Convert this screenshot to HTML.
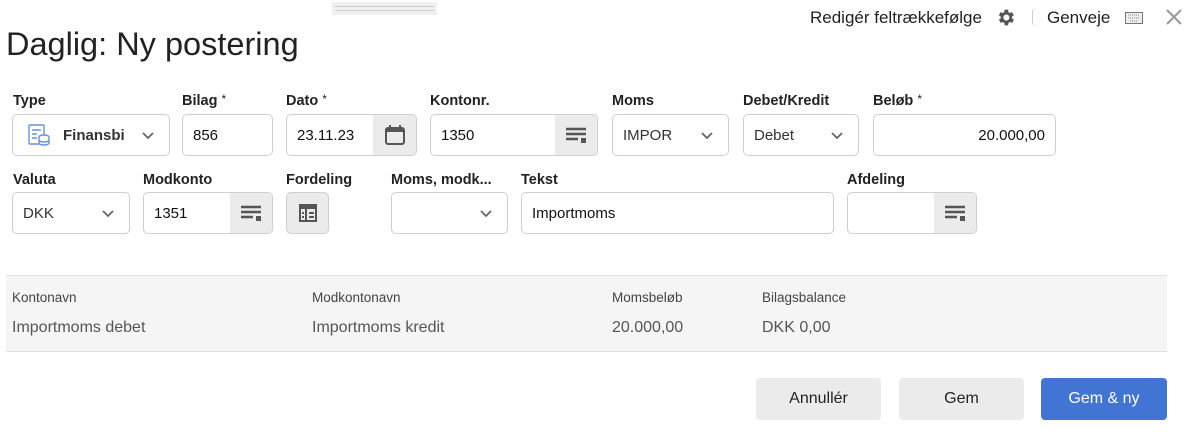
<!DOCTYPE html>
<html><head><meta charset="utf-8"><style>
*{box-sizing:border-box;margin:0;padding:0}
body{width:1192px;height:439px;background:#fff;font-family:"Liberation Sans",Arial,sans-serif;position:relative;overflow:hidden;color:#222}
.a{position:absolute}
.lbl{position:absolute;font-weight:bold;font-size:14.5px;color:#222}
.lbl sup{font-weight:normal;font-size:12px;vertical-align:top;position:relative;top:-1px}
.in{position:absolute;border:1px solid #cfcfcf;border-radius:5px;background:#fff;font-size:15px;color:#111;display:flex;align-items:center;padding-left:10px;overflow:hidden}
.btn{position:absolute;top:0;right:0;bottom:0;width:42px;background:#ebebeb;display:flex;align-items:center;justify-content:center}
.chev{position:absolute;right:14px;top:15px}
.sel{color:#333}
.pl{position:absolute;font-size:13.5px;color:#444}
.pv{position:absolute;font-size:16px;color:#555}
.b{position:absolute;top:378px;height:42px;border-radius:4px;font-size:16px;display:flex;align-items:center;justify-content:center;background:#ebebeb;color:#222}
</style></head><body>
<div class="a" style="left:332px;top:2px;width:105px;height:13px;background:#f0f0f0"></div>
<div class="a" style="left:335px;top:6px;width:99px;height:1px;background:#ccc"></div>
<div class="a" style="left:335px;top:10px;width:99px;height:1px;background:#ccc"></div>
<div class="a" style="left:810px;top:8px;font-size:17px;color:#222">Redigér feltrækkefølge</div>
<svg class="a" style="left:995px;top:7px" width="21" height="21" viewBox="0 0 24 24"><path fill="#555" d="M19.4 13a7.5 7.5 0 000-2l2.1-1.6-2-3.5-2.5 1a7 7 0 00-1.7-1L15 3h-4l-.4 2.9a7 7 0 00-1.7 1l-2.5-1-2 3.5L6.6 11a7.5 7.5 0 000 2l-2.1 1.6 2 3.5 2.5-1a7 7 0 001.7 1L11 21h4l.4-2.9a7 7 0 001.7-1l2.5 1 2-3.5zM13 15.5a3.5 3.5 0 110-7 3.5 3.5 0 010 7z"/></svg>
<div class="a" style="left:1032px;top:8px;width:4px;height:18px;border-left:1px solid #ccc;border-radius:4px 0 0 4px"></div>
<div class="a" style="left:1047px;top:8px;font-size:17px;color:#222">Genveje</div>
<svg class="a" style="left:1125px;top:12px" width="18" height="12" viewBox="0 0 18 12"><rect x="0.5" y="0.5" width="17" height="11" fill="#eee" stroke="#777"/><path d="M3 3h12M3 6h12M5 9h8" stroke="#888" stroke-dasharray="1 1"/></svg>
<svg class="a" style="left:1165px;top:8px" width="18" height="18" viewBox="0 0 18 18"><path d="M2 2L16 16M16 2L2 16" stroke="#999" stroke-width="2"/></svg>
<div class="a" style="left:6px;top:26px;font-size:32.5px;color:#222">Daglig: Ny postering</div>

<div class="lbl" style="left:13px;top:93px">Type</div>
<div class="lbl" style="left:182px;top:93px">Bilag <sup>*</sup></div>
<div class="lbl" style="left:286px;top:93px">Dato <sup>*</sup></div>
<div class="lbl" style="left:430px;top:93px">Kontonr.</div>
<div class="lbl" style="left:612px;top:93px">Moms</div>
<div class="lbl" style="left:743px;top:93px">Debet/Kredit</div>
<div class="lbl" style="left:873px;top:93px">Beløb <sup>*</sup></div>

<svg width="0" height="0" style="position:absolute"><defs>
<symbol id="ch" viewBox="0 0 14 10"><path d="M2 3l5 5 5-5" fill="none" stroke="#666" stroke-width="1.8"/></symbol>
<symbol id="ls" viewBox="0 0 20 16"><path d="M0 2h20M0 7h20M0 12h12" stroke="#555" stroke-width="2.4"/><rect x="15" y="11" width="5" height="5" fill="#555"/></symbol>
</defs></svg>

<div class="in" style="left:12px;top:114px;width:158px;height:42px;padding-left:14px">
<svg width="24" height="24" viewBox="0 0 24 24"><rect x="2" y="2" width="15" height="19" rx="1" fill="none" stroke="#6a8fe0" stroke-width="1.4"/><path d="M5 7h9M5 11h5M5 15h5" stroke="#6a8fe0" stroke-width="1.4"/><ellipse cx="17" cy="14" rx="5" ry="2" fill="#fff" stroke="#6a8fe0" stroke-width="1.4"/><path d="M12 14v6c0 1.2 2.2 2 5 2s5-.8 5-2v-6M12 17c0 1.2 2.2 2 5 2s5-.8 5-2" fill="#fff" stroke="#6a8fe0" stroke-width="1.4"/></svg>
<span style="font-weight:bold;margin-left:12px;color:#333">Finansbi</span><svg class="chev" width="14" height="10"><use href="#ch"/></svg></div>
<div class="in" style="left:182px;top:114px;width:91px;height:42px">856</div>
<div class="in" style="left:286px;top:114px;width:131px;height:42px">23.11.23<div class="btn" style="width:43px"><svg width="22" height="22" viewBox="0 0 22 22"><rect x="2" y="4" width="18" height="16" rx="2" fill="none" stroke="#555" stroke-width="2"/><rect x="2" y="4" width="18" height="4" fill="#555"/><path d="M6 1v5M16 1v5" stroke="#555" stroke-width="2"/></svg></div></div>
<div class="in" style="left:430px;top:114px;width:168px;height:42px">1350<div class="btn"><svg width="20" height="16"><use href="#ls"/></svg></div></div>
<div class="in sel" style="left:612px;top:114px;width:117px;height:42px">IMPOR<svg class="chev" width="14" height="10"><use href="#ch"/></svg></div>
<div class="in sel" style="left:743px;top:114px;width:116px;height:42px">Debet<svg class="chev" width="14" height="10"><use href="#ch"/></svg></div>
<div class="in" style="left:873px;top:114px;width:183px;height:42px;justify-content:flex-end;padding-right:10px">20.000,00</div>

<div class="lbl" style="left:13px;top:172px">Valuta</div>
<div class="lbl" style="left:143px;top:172px">Modkonto</div>
<div class="lbl" style="left:286px;top:172px">Fordeling</div>
<div class="lbl" style="left:391px;top:172px">Moms, modk...</div>
<div class="lbl" style="left:521px;top:172px">Tekst</div>
<div class="lbl" style="left:847px;top:172px">Afdeling</div>

<div class="in sel" style="left:12px;top:192px;width:118px;height:42px">DKK<svg class="chev" width="14" height="10"><use href="#ch"/></svg></div>
<div class="in" style="left:143px;top:192px;width:130px;height:42px">1351<div class="btn"><svg width="20" height="16"><use href="#ls"/></svg></div></div>
<div class="in" style="left:286px;top:192px;width:43px;height:42px;background:#ebebeb;justify-content:center;padding:0"><svg width="18" height="18" viewBox="0 0 18 18"><rect x="1" y="1" width="16" height="16" fill="none" stroke="#555" stroke-width="2"/><rect x="1" y="1" width="16" height="4" fill="#555"/><path d="M7 5v12M10 9h5M10 13h5M3 9h2M3 13h2" stroke="#555" stroke-width="2"/></svg></div>
<div class="in" style="left:391px;top:192px;width:117px;height:42px"><svg class="chev" width="14" height="10"><use href="#ch"/></svg></div>
<div class="in" style="left:521px;top:192px;width:313px;height:42px">Importmoms</div>
<div class="in" style="left:847px;top:192px;width:130px;height:42px"><div class="btn"><svg width="20" height="16"><use href="#ls"/></svg></div></div>

<div class="a" style="left:6px;top:275px;width:1161px;height:77px;background:#f5f5f5;border-top:1px solid #e0e0e0;border-bottom:1px solid #e0e0e0"></div>
<div class="pl" style="left:12px;top:290px">Kontonavn</div>
<div class="pl" style="left:312px;top:290px">Modkontonavn</div>
<div class="pl" style="left:612px;top:290px">Momsbeløb</div>
<div class="pl" style="left:762px;top:290px">Bilagsbalance</div>
<div class="pv" style="left:12px;top:319px">Importmoms debet</div>
<div class="pv" style="left:312px;top:319px">Importmoms kredit</div>
<div class="pv" style="left:612px;top:319px">20.000,00</div>
<div class="pv" style="left:762px;top:319px">DKK 0,00</div>

<div class="b" style="left:756px;width:125px">Annullér</div>
<div class="b" style="left:899px;width:125px">Gem</div>
<div class="b" style="left:1041px;width:126px;background:#4274d3;color:#fff">Gem &amp; ny</div>
</body></html>
